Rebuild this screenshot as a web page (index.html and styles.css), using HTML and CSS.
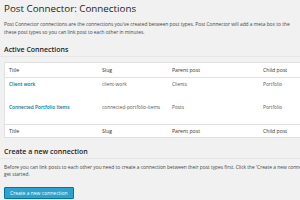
FILE: index.html
```html
<!DOCTYPE html>
<html>
<head>
<meta charset="utf-8">
<link rel="stylesheet" href="styles.css">
</head>
<body>
<div class="wrap">
  <h2 class="title">Post Connector: Connections</h2>
  <p class="intro">
    <span class="line">Post Connector connections are the connections you've created between post types. Post Connector will add a meta box to the</span>
    <span class="line">these post types so you can link post to each other in minutes.</span>
  </p>
  <h3 class="section">Active Connections</h3>
  <table class="list">
    <thead>
      <tr><th class="c-title">Title</th><th class="c-slug">Slug</th><th class="c-parent">Parent post</th><th class="c-child">Child post</th></tr>
    </thead>
    <tbody>
      <tr><td><a href="#">Client work</a></td><td>client-work</td><td>Clients</td><td>Portfolio</td></tr>
      <tr><td><a href="#">Connected Portfolio Items</a></td><td>connected-portfolio-items</td><td>Posts</td><td>Portfolio</td></tr>
    </tbody>
    <tfoot>
      <tr><th>Title</th><th>Slug</th><th>Parent post</th><th>Child post</th></tr>
    </tfoot>
  </table>
  <h3 class="section section-create">Create a new connection</h3>
  <p class="intro intro-create">
    <span class="line">Before you can link posts to each other you need to create a connection between their post types first. Click the 'Create a new connection' button to</span>
    <span class="line">get started.</span>
  </p>
  <a class="button" href="#">Create a new connection</a>
</div>
</body>
</html>
```
FILE: styles.css
```css
html, body {
  margin: 0;
  padding: 0;
}
body {
  background: #f1f1f1;
  font-family: "Open Sans", "Liberation Sans", sans-serif;
  color: #444;
  overflow: hidden;
  width: 300px;
  height: 200px;
}
.wrap {
  width: 340px;
  padding: 0 0 0 4px;
}
.title {
  font-size: 9.8px;
  font-weight: 400;
  color: #222;
  margin: 0;
  padding: 3px 0 0;
  line-height: 12px;
}
.intro {
  margin: 5px 0 0;
  font-size: 4.85px;
  line-height: 8px;
  color: #444;
}
.line {
  display: block;
  white-space: nowrap;
}
.section {
  font-size: 7px;
  font-weight: 600;
  color: #222;
  margin: 9px 0 0 -4px;
  padding: 0 0 1px 4px;
  line-height: 10px;
  border-bottom: 1px solid #e6e6e6;
}
.list {
  margin-top: 5px;
  width: 340px;
  border-collapse: collapse;
  background: #fff;
  border: 1px solid #e1e1e1;
  font-size: 5px;
  table-layout: fixed;
}
.list th, .list td {
  text-align: left;
  vertical-align: top;
  padding: 3px 4px;
  line-height: 7px;
}
.list th {
  font-weight: 400;
  color: #333;
  font-size: 5.2px;
}
.list thead th {
  border-bottom: 1px solid #e1e1e1;
  padding-top: 3.5px;
  padding-bottom: 3px;
}
.list tfoot th {
  border-top: 1px solid #e1e1e1;
  padding-top: 3px;
  padding-bottom: 2px;
}
.list td {
  height: 16.5px;
  color: #555;
  font-size: 4.8px;
}
.list tbody tr + tr td {
  padding-top: 4px;
}
.list a {
  color: #0074a2;
  text-decoration: none;
  font-weight: 600;
}
.c-title { width: 85px; }
.c-slug { width: 62px; }
.c-parent { width: 83px; }
.section-create {
  margin-top: 9px;
}
.intro-create {
  margin-top: 5px;
  line-height: 7px;
}
.button {
  display: inline-block;
  margin-top: 1px;
  background: #2ea2cc;
  border: 1px solid #0074a2;
  color: #fff;
  font-size: 5px;
  line-height: 10px;
  padding: 0 5px;
  border-radius: 1px;
  text-decoration: none;
}
```
